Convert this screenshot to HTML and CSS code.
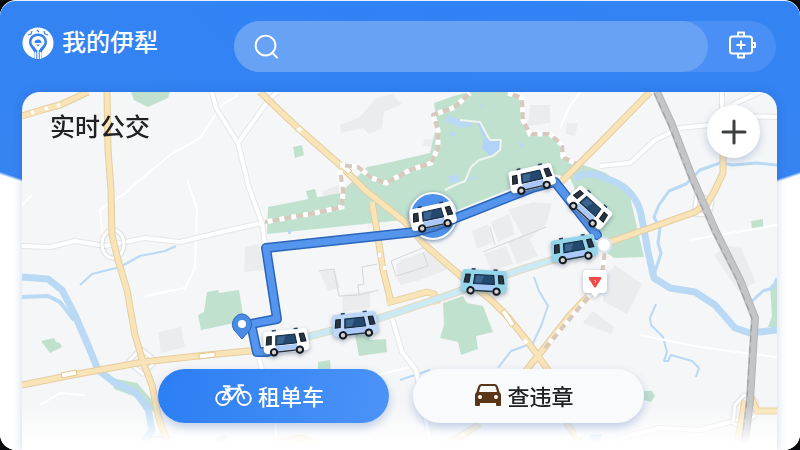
FILE: index.html
```html
<!DOCTYPE html>
<html lang="zh-CN">
<head>
<meta charset="utf-8">
<meta name="viewport" content="width=device-width, initial-scale=1">
<title>我的伊犁</title>
<link rel="stylesheet" href="styles.css">
</head>
<body>
<div class="screen">
  <header class="header">
    <div class="brand">
      <svg class="brand-logo" viewBox="0 0 32 32" aria-hidden="true">
        <circle cx="16" cy="16" r="15.500" fill="#fff"/>
        <path d="M16 6.500c-5.500 0-9 4-9 8.500 0 5 4.500 7.500 5.500 11v6h7v-6c1-3.500 5.500-6 5.500-11 0-4.500-3.500-8.500-9-8.500z" fill="#3482f3"/>
        <path d="M6 8l3-1 1-3M26 8l-3-1-1-3M15 3l2 2" stroke="#3482f3" stroke-width="1.200" fill="none"/>
        <path d="M16 9c-4 0-6.500 2.800-6.500 6 0 3.500 4 5 5 8h3c1-3 5-4.500 5-8 0-3.200-2.500-6-6.500-6z" fill="#fff"/>
        <path d="M12.500 16q0-3.500 3.500-3.500t3.500 3.500zM14 17.500h4l-2 2z" fill="#3482f3"/>
        <path d="M16 21v11M13.500 25v7M18.500 25v7" stroke="#fff" stroke-width="1.500"/>
      </svg>
      <h1 class="brand-name">我的伊犁</h1>
    </div>
    <div class="search-bar">
      <label class="search">
        <svg class="search-icon" viewBox="0 0 26 26" aria-hidden="true"><circle cx="12" cy="12" r="10.300"/><path d="M19 19.500l5 5"/></svg>
        <input class="search-input" type="search" aria-label="搜索">
      </label>
      <button class="device" aria-label="设备">
        <svg viewBox="0 0 28 28" aria-hidden="true">
          <rect x="2" y="5.500" width="22" height="17" rx="2.500"/>
          <path d="M10 5V1.500h6V5M10 23v3.500h6V23M24.500 12h2.500v4h-2.500M13 9.500v9M8.500 14h9"/>
        </svg>
      </button>
    </div>
  </header>

  <main class="card">
    <svg class="map" viewBox="22 92 755 358" preserveAspectRatio="xMidYMid slice" role="img" aria-label="地图">
      <defs>
        <g id="bus">
          <path class="bus-body" d="M-19-12h38q3 0 3 3l1 15q0 4-4 4h-38q-4 0-4-4l1-15q0-3 3-3z"/>
          <path d="M-13-12.500h4M9-12.500h4" stroke="#24445f" stroke-width="1.500"/>
          <path d="M-9.500-7h19l1 9h-21z" fill="#24496f" stroke="#14273c"/>
          <path d="M-8-6h8l-3 7h-6z" fill="#3c6690"/>
          <path d="M-10.500 3h21l1 5h-23z" fill="#aac8fa"/>
          <path d="M-18.500-7h4.500l-1 8h-5zM14-7h4.500l1.500 8h-5z" fill="#283541" stroke="#141c25"/>
          <path d="M-9 9h18" stroke="#273442" stroke-width="1.500"/>
          <circle cx="-13" cy="9" r="3.200" fill="#d5d0cb" stroke="#111820" stroke-width="2"/>
          <circle cx="13" cy="9" r="3.200" fill="#d5d0cb" stroke="#111820" stroke-width="2"/>
        </g>
        <linearGradient id="fade" x1="0" y1="0" x2="0" y2="1">
          <stop offset="0" stop-color="#fff" stop-opacity="0"/><stop offset=".85" stop-color="#fff"/>
        </linearGradient>
      </defs>
      <rect x="22" y="92" width="755" height="358" fill="#f5f6f7"/>

      <!-- city blocks -->
      <g fill="#ebecee">
        <path d="M340 125l20-8 15-18 17-5 10 10-18 8-2 16-13 6-6-6-22 5zM158 332l23-5 4 20-24 6zM245 247l14-3 5 26-20 2zM323 191l16-6v18l-17 4zM530 105l20 0v18l-22 3zM567 123h11l-3 13-9-2zM320 272l15-2 5 18-12 3zM342 295l28-4v17l-27 4zM472 231l16-7 5 18-16 7zM491 222l18-8 6 20-17 8zM484 254l22-8 7 18-21 7zM508 242l19-8 11 22-21 8zM508 210l25-8 19 2-6 20-20 18-11-20zM400 260l29-10 22 18-31 12-20 5zM396 264l28-9 5 16-31 11zM605 277l10-12 27 19-15 30-24-13zM583 322l10-11 21 16-2 7-28-10zM714 255l12-9 15 2 15 34-17 10zM424 139h13v8l-14-1z"/>
      </g>
      <!-- parks -->
      <g fill="#c0e1cd">
        <path d="M470 92h38l15 7v20l9 15h20l12 12v10l14 7 28 10 24 24 14 60-30 1-14-10-30-70-20-5-90 36-47 10-146 15 1-27 72-14 15-14 12-12 20-4 43-10 7-30-3-20 20-7z"/>
        <path d="M131 92h39l-2 6-20 9-14-7zM293 147l9-2 2 10-9 3zM306 191l9-2 3 11-9 2zM207 292l11-2 1 3 20-3 5 31-43 9-3-15 6-3zM41 341l13-3 2 4 4 1 2 4-12 6zM355 335l13-1 2 6 16-1 1 13-28 4zM318 362l12-2 1 13h-13zM443 303l20-7 4 7 16 3 10 26-17 4 2 13-17 6-3-13-18-4 4-13zM751 221l12-2v8l-11 2zM644 391l8 0 3 5-4 6-7-2zM112 378l25 5 14 16 3 12-8 2-10-16-22-8zM777 280l-7 6 2 30-4 11h9zM215 438l11-3 2 8-11 4z"/>
      </g>
      <!-- water -->
      <g class="water">
        <path stroke-width="7" d="M22 277l26 2 14 11 13 25 15 35 8 20 17 13 20 9 13 16 4 22-14 20"/>
        <path stroke-width="4" d="M22 297l26-1 12 6 14 18M98 370l22 14 18 10"/>
        <path stroke-width="7" d="M575 178q16-8 30 0 27 8 35 32 4 18 8 42l6 26 16 10 25 4 20 13 20 23 15 5 27-3"/>
        <path stroke-width="3" d="M777 165l-20-2-24 2-13-2-20 7-14 14-17 7-10 14-5 12 6 11-2 15 3 10-7 22M750 303l13-12 10-3 4-10"/>
        <path stroke-width="2" d="M80 285l12-11 28-7 20-11 25-5 11-5M656 304l-6 14 1 7 12 12 4 15-3 9h4l3-6 21 6 7 7-3 9M534 277l5 14 9 15-7 20-8 17-22 8-13 17M400 380l30-10M465 180l12-3M480 108l4-4M150 437h20"/>
        <path stroke-width="7" d="M446 118l15 6 11-1M449 180l10-2"/>
        <path stroke-width="4" d="M450 133l5 2M520 145h3M288 232h3"/>
      </g>
      <path d="M476 120l7 4 3 14 14 2v10l-10 6-8-8 2-10zM590 435l12-1-5 12-10 1z" fill="#b2d3f7"/>
      <path class="trail" d="M460 120l20 2 7 13 3 5 11 0-1 10-7 6-14 4-8 7-6 14-12 5-8 4"/>

      <!-- minor roads -->
      <g class="faint-road">
        <path d="M238 95l-16 10-22 33-30 17-42 35M187 180l10 28-2 60-10 20-40 8M22 205l10-10M130 190l-30 20 3 30M580 92l-10 14-10 22M690 240l87-15M640 335l60 12 90 12M40 405l20-12 25 2M350 382l60-15"/>
      </g>
      <g class="road-case"><path d="M212 92l4 16 22 35 11 45 13 35 5 35M238 143l32-45 8-6M22 246l28 1 25-6 30 5 40-8 35 4 50-12 32-7M600 166l30-3 25-23 25-12 30-3 30-9 37 1M722 92v26M732 105l28-13M259 358l4 16 12 45 2 31M392 318l10 34 14 18 14 70 5 10M590 450l30-12 40-10 40 2 45-12"/></g>
      <g class="road"><path d="M212 92l4 16 22 35 11 45 13 35 5 35M238 143l32-45 8-6M22 246l28 1 25-6 30 5 40-8 35 4 50-12 32-7M600 166l30-3 25-23 25-12 30-3 30-9 37 1M722 92v26M732 105l28-13M259 358l4 16 12 45 2 31M392 318l10 34 14 18 14 70 5 10M590 450l30-12 40-10 40 2 45-12"/></g>
      <g fill="none" stroke="#d5d6d8"><path d="M318 271l16-2 5 27 20-1-1-10 6-1-2-17 15-3M359 295l20-5M425 247l-34 14 5 15 32-10-5-14M483 252l63-25M490 227l5 18"/></g>

      <!-- interchanges -->
      <g class="loop">
        <ellipse cx="113" cy="244" rx="11" ry="14"/><path d="M128 362l13-13 15 12-13 13zM697 194l15 7-3 14-15-1zM735 405l9-10 12 6-1 14-13 12-9-4z"/>
      </g>

      <!-- main roads -->
      <g>
        <path class="main-case" d="M22 116l23-7 15-4 28-13M107 92l1 58 3 40 1 45 6 25 9 30 8 45 8 27 9 23 6 30 12 35M22 385l45-9 76-14 64-7 53-5M260 92l38 36 42 37 25 25 40 32 20 23 37 32 28 22 18 18 20 25 20 28 20 55 17 25M594 290l-24 25-25 32-20 25M480 424l-42 26M650 92l-50 51-45 45M372 202l4 23 7 45 8 32M387 303l40-11 7 2 3 10M610 242l40-14 45-16 12-8 8-14 8-17v-25M750 395l7 16h20M745 400l-9 50M277 443l25-5 25 12"/>
        <path class="main" d="M22 116l23-7 15-4 28-13M107 92l1 58 3 40 1 45 6 25 9 30 8 45 8 27 9 23 6 30 12 35M22 385l45-9 76-14 64-7 53-5M260 92l38 36 42 37 25 25 40 32 20 23 37 32 28 22 18 18 20 25 20 28 20 55 17 25M594 290l-24 25-25 32-20 25M480 424l-42 26M650 92l-50 51-45 45M372 202l4 23 7 45 8 32M387 303l40-11 7 2 3 10M610 242l40-14 45-16 12-8 8-14 8-17v-25M750 395l7 16h20M745 400l-9 50M277 443l25-5 25 12"/>
      </g>
      <g stroke="#e5c68c" fill="#fff"><path d="M61 373l15-3 1 5-15 3zM199 354l16-2v5l-16 2zM501 312l4-3 10 15-4 3zM339 166l5-3 8 8-4 3z"/></g>
      <path d="M31 113l3-1M45 109l3-1M57 106l3-1M298 128l3 3M378 255l3 0M383 268h3M524 340l3 3M461 436l4-2M577 432l3 5" stroke="#fff" stroke-width="4" fill="none"/>
      <g><path class="cross-case" d="M295 340l85-22 60-20 80-28 80-25"/><path class="cross-fill" d="M295 340l85-22 60-20 80-28 80-25"/></g>

      <!-- elevated light rail -->
      <g>
        <path class="rail-base" d="M340 165l18 2 14 11 14 5 24-13 21-7 7-15v-18l-5-15 22-8 15-14M508 93l14 5 1 22 7 14h20l12 11 1 12 12 6M340 170l3 20-1 17-27 6-50 9M605 248l-2 20-10 23-25 30-23 27"/>
        <path class="rail-gap" d="M340 165l18 2 14 11 14 5 24-13 21-7 7-15v-18l-5-15 22-8 15-14M508 93l14 5 1 22 7 14h20l12 11 1 12 12 6M340 170l3 20-1 17-27 6-50 9M605 248l-2 20-10 23-25 30-23 27"/>
      </g>
      <path class="track-case" d="M657 92l15 33 20 52 23 53 25 50 15 38-2 32-3 50-6 50"/>
      <path class="track" d="M657 92l15 33 20 52 23 53 25 50 15 38-2 32-3 50-6 50"/>
      <path class="track-dash" d="M654 92l15 33 20 52 23 53 25 50 15 38-2 32-3 50-6 50"/>

      <rect x="22" y="405" width="755" height="45" fill="url(#fade)"/>

      <!-- bus route -->
      <circle cx="433" cy="216" r="23" class="stop-halo"/>
      <path class="route-case" d="M268 352h-11l-6-28 26-5-11-71 149-16 18-5 99-39 23-6 42 53"/>
      <path class="route" d="M268 352h-11l-6-28 26-5-11-71 149-16 18-5 99-39 23-6 42 53"/>
      <path d="M242 339l-8-9q-3-5-1-9 3-7 9-7t9 7q2 4-1 9z" class="pin"/>
      <circle cx="242" cy="324" r="4" fill="#fff"/>
      <circle cx="604" cy="245" r="7" class="node"/>
      <g class="warning">
        <path d="M587 270h16q4 0 4 4v15q0 4-4 4h-4l-4 5-4-5h-4q-4 0-4-4v-15q0-4 4-4z" fill="#fff"/>
        <path d="M590 277h10q2 0 1 2l-5 8q-1 1-2 0l-5-8q-1-2 1-2z" fill="#f04a45"/>
        <path d="M594 280l2 1-1 2" fill="none" stroke="#ffb0aa"/>
      </g>
      <g class="buses">
        <use href="#bus" class="white" transform="translate(286 342) rotate(-6)"/>
        <use href="#bus" class="pale" transform="translate(355 325) rotate(-6)"/>
        <use href="#bus" class="cyan" transform="translate(484 282) rotate(3)"/>
        <use href="#bus" class="cyan" transform="translate(574 249) rotate(-10)"/>
        <use href="#bus" class="white" transform="translate(433 217) rotate(-12)"/>
        <use href="#bus" class="white" transform="translate(532 179) rotate(-13)"/>
        <use href="#bus" class="white" transform="translate(589 208) rotate(42)"/>
      </g>
    </svg>

    <div class="overlay">
      <div class="card-top">
        <h2 class="card-title">实时公交</h2>
        <button class="add" aria-label="添加"><svg viewBox="0 0 26 26" aria-hidden="true"><path d="M13 2v22M2 13h22"/></svg></button>
      </div>
      <div class="actions">
        <button class="action primary">
          <svg class="bike" viewBox="0 0 38 24" aria-hidden="true">
            <circle cx="8" cy="15.500" r="6.800"/><circle cx="30" cy="15.500" r="6.800"/>
            <path d="M8 15.500l6-10h11l-8 11-6-11M17 16.500H8M30 15.500L24 2h5M9 3h6M13 3l2 5"/>
          </svg>
          <span>租单车</span>
        </button>
        <button class="action secondary">
          <svg class="car" viewBox="0 0 26 24" aria-hidden="true">
            <path fill-rule="evenodd" d="M6 1h14q2 0 3 3l1.500 5Q26 10.500 26 12v10q0 1-1 1h-3q-1 0-1-1v-2H5v2q0 1-1 1H1q-1 0-1-1V12q0-1.500 1.500-3L3 4q1-3 3-3zm.5 2Q5.500 3 5 5L4 9h18l-1-4q-.5-2-1.500-2z"/>
            <circle cx="5" cy="14" r="2" fill="#fff"/><circle cx="21" cy="14" r="2" fill="#fff"/>
          </svg>
          <span>查违章</span>
        </button>
      </div>
    </div>
  </main>
</div>
</body>
</html>
```
FILE: styles.css
```css
* { box-sizing: border-box; }

body {
  margin: 0;
  background: #080a0e;
  font-family: "Noto Sans CJK SC", "Noto Sans", sans-serif;
}

button { border: 0; padding: 0; font: inherit; cursor: pointer; }
h1, h2 { margin: 0; font-weight: 500; }
svg { display: block; }

.screen {
  display: flex;
  flex-direction: column;
  min-height: 100vh;
  border-top: 1px solid #e8f0fa;
  border-radius: 16px;
  overflow: hidden;
  background: radial-gradient(ellipse 75% 233px at 50% 0, #3082f5 0, #3684f2 99%, #fff 100%) #fff;
}

.header {
  display: flex;
  align-items: center;
  justify-content: space-between;
  gap: 76px;
  padding: 20px 24px 0 22px;
}

.brand { display: flex; align-items: center; gap: 8px; margin-bottom: 8px; }
.brand-logo { width: 32px; height: 32px; }
.brand-name { margin-bottom: 4px; color: #fff; font-size: 24px; line-height: 32px; white-space: nowrap; }

.search-bar {
  display: flex;
  flex: 1;
  height: 51px;
  border-radius: 26px;
  background: #4a8ff5;
}
.search {
  display: flex;
  flex: 1;
  align-items: center;
  gap: 12px;
  min-width: 0;
  padding: 0 20px;
  border-radius: 26px;
  background: #67a2f5;
}
.search-icon { width: 25px; height: 25px; fill: none; stroke: #fff; stroke-width: 2; stroke-linecap: round; }
.search-input { flex: 1; min-width: 0; border: 0; outline: 0; background: transparent; color: #fff; font: inherit; }
.device { display: grid; place-items: center; width: 68px; padding-bottom: 4px; background: transparent; }
.device svg { width: 28px; height: 28px; fill: none; stroke: #fff; stroke-width: 2; stroke-linejoin: round; }

.card {
  display: grid;
  flex: 1;
  margin: 20px 23px 0 22px;
  border-radius: 18px 18px 0 0;
  overflow: hidden;
  box-shadow: 0 0 10px rgba(20, 70, 150, .22);
}
.map, .overlay { grid-area: 1 / 1; }
.map { width: 100%; height: 100%; min-height: 0; }
.overlay {
  display: flex;
  flex-direction: column;
  justify-content: space-between;
  padding: 13px 17px 27px 28px;
}
.card-top { display: flex; justify-content: space-between; align-items: flex-start; }
.card-title { padding-top: 2px; color: #202124; font-size: 25px; line-height: 36px; }
.add {
  display: grid;
  place-items: center;
  width: 53px;
  height: 53px;
  border-radius: 50%;
  background: #fff;
  box-shadow: 0 3px 8px rgba(60, 100, 160, .3);
}
.add svg { width: 26px; height: 26px; stroke: #3d3e40; stroke-width: 3; stroke-linecap: round; }

.actions {
  display: grid;
  grid-template-columns: 1fr 1fr;
  gap: 24px;
  margin: 0 116px 0 108px;
}
.action {
  display: flex;
  align-items: center;
  justify-content: center;
  gap: 6px;
  height: 54px;
  padding: 0 8px 2px 0;
  border-radius: 27px;
  font-size: 22px;
  font-weight: 500;
  line-height: 32px;
  box-shadow: 0 4px 10px rgba(60, 110, 190, .32);
}
.primary { color: #fff; background: linear-gradient(100deg, #2b7ef3, #4c93f7); }
.secondary { color: #202124; background: #f9fafb; }
.bike { width: 37px; height: 24px; fill: none; stroke: #fff; stroke-width: 2; stroke-linecap: round; stroke-linejoin: round; }
.car { width: 26px; height: 24px; fill: #5b3517; }

.water path { fill: none; stroke: #b9d9f5; stroke-linejoin: round; }
.trail { fill: none; stroke: #eef5ef; stroke-width: 2; stroke-linejoin: round; }
.faint-road { fill: none; stroke: #fff; stroke-width: 2; }
.road-case { fill: none; stroke: #e4e6e8; stroke-width: 6; stroke-linejoin: round; }
.road { fill: none; stroke: #fff; stroke-width: 4; stroke-linejoin: round; }
.loop { fill: none; stroke: #fff; stroke-width: 3; filter: drop-shadow(0 0 1px #b8babd); }
.main-case { fill: none; stroke: #e5cda0; stroke-width: 7; stroke-linejoin: round; }
.main { fill: none; stroke: #f9e4b7; stroke-width: 5; stroke-linejoin: round; }
.cross-case { fill: none; stroke: #e6d9bd; stroke-width: 8; }
.cross-fill { fill: none; stroke: #cbeaf3; stroke-width: 6; }
.rail-base { fill: none; stroke: #d8c8bd; stroke-width: 4; stroke-linejoin: round; }
.rail-gap { fill: none; stroke: #fff; stroke-width: 5; stroke-dasharray: 5 7; }
.track-case { fill: none; stroke: #b2b4b6; stroke-width: 8; stroke-linejoin: round; }
.track { fill: none; stroke: #c3c5c7; stroke-width: 6; stroke-linejoin: round; }
.track-dash { fill: none; stroke: #999ca0; stroke-width: 1; stroke-dasharray: 7 4; }

.stop-halo { fill: #4e91ec; stroke: #fff; stroke-width: 2; filter: drop-shadow(0 1px 2px #6684ac); }
.route-case { fill: none; stroke: #2b66bd; stroke-width: 10; stroke-linejoin: round; stroke-linecap: round; }
.route { fill: none; stroke: #5595ed; stroke-width: 7; stroke-linejoin: round; stroke-linecap: round; }
.pin { fill: #4a8be4; stroke: #2d68be; }
.node { fill: #fff; stroke: #dbe5ef; stroke-width: 2; }
.warning { filter: drop-shadow(0 1px 2px #aab8ca); }
.buses { filter: drop-shadow(0 2px 2px rgba(40, 60, 90, .4)); }
.white { fill: #fff; }
.pale { fill: #bdd7f8; }
.cyan { fill: #94d5ea; }
```
